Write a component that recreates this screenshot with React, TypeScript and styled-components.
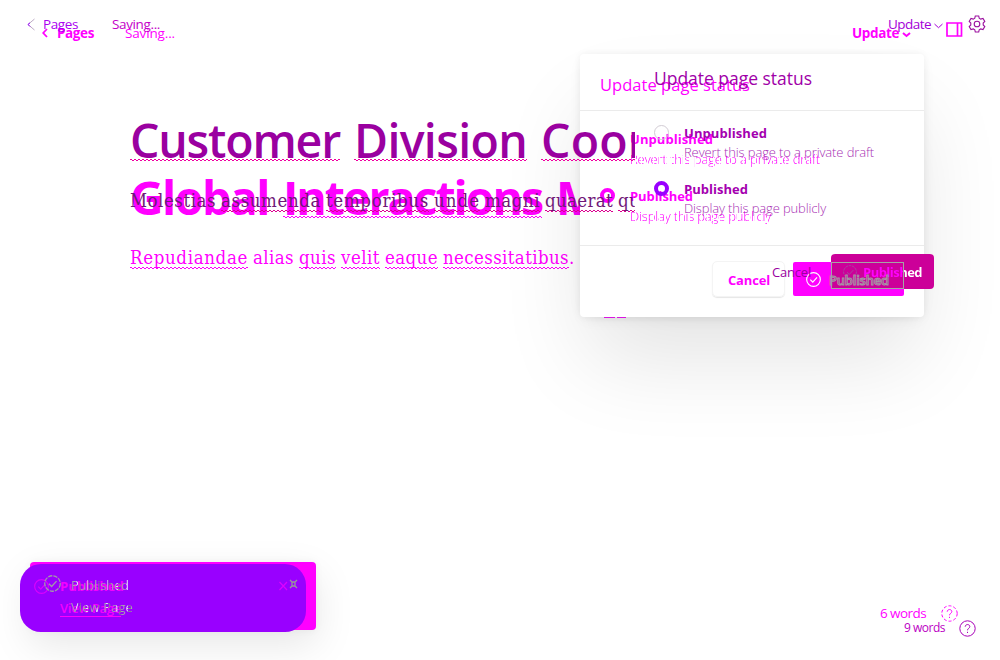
import React, { useLayoutEffect, useRef, useState } from "react";
import styled, { createGlobalStyle, css } from "styled-components";

const GlobalStyle = createGlobalStyle`
  * { box-sizing: border-box; }
  body { margin: 0; background: #fff; overflow: hidden; }
`;

const magenta = "#ff00ff";
const violet = "#9900ff";
const plum = "#9a00a0";

const Canvas = styled.div`
  display: grid;
  width: 1000px;
  height: 660px;
  overflow: hidden;
  background: #fff;
  font-family: "Open Sans", "Noto Sans", sans-serif;
`;

const Layer = styled.main<{ $front?: boolean }>`
  grid-area: 1 / 1;
  display: flex;
  flex-direction: column;
  width: 1000px;
  height: 660px;
  min-width: 0;
  position: relative;
  z-index: ${(p) => (p.$front ? 3 : 1)};
`;

const FitSpan = styled.span`
  display: inline-block;
  white-space: pre;
  flex: none;
`;

/* Tracks a label so that it fills exactly the given width. */
function Fit({ width, children }: { width: number; children: string }) {
  const ref = useRef<HTMLSpanElement>(null);
  const [spacing, setSpacing] = useState<number | null>(null);
  useLayoutEffect(() => {
    if (ref.current && spacing === null) {
      setSpacing((width - ref.current.getBoundingClientRect().width) / children.length);
    }
  }, [width, children, spacing]);
  return (
    <FitSpan ref={ref} style={spacing === null ? undefined : { width, letterSpacing: spacing }}>
      {children}
    </FitSpan>
  );
}

const TopBar = styled.header<{ $top: number; $left: number }>`
  display: flex;
  align-items: center;
  height: 20px;
  margin-top: ${(p) => p.$top}px;
  padding-left: ${(p) => p.$left}px;
  font-size: 14px;
  line-height: 20px;
`;

const BarItem = styled.div<{ $color: string; $bold?: boolean; $gap?: number; $size?: number }>`
  display: flex;
  align-items: center;
  margin-left: ${(p) => p.$gap ?? 0}px;
  color: ${(p) => p.$color};
  font-weight: ${(p) => (p.$bold ? 700 : 400)};
  font-size: ${(p) => p.$size ?? 13.5}px;
  height: 20px;
`;

const Glyph = styled.svg<{ $gap?: number; $drop?: number }>`
  display: block;
  flex: none;
  fill: none;
  margin-left: ${(p) => p.$gap ?? 0}px;
  margin-top: ${(p) => p.$drop ?? 0}px;
`;

const Title = styled.h1<{ $top: number; $color: string; $weight: number; $clip: number }>`
  display: flex;
  gap: 14px;
  margin: ${(p) => p.$top}px 0 0 130px;
  width: ${(p) => p.$clip}px;
  overflow: hidden;
  height: 60px;
  font-size: 46.5px;
  line-height: 56px;
  font-weight: ${(p) => p.$weight};
  color: ${(p) => p.$color};
`;

const Paragraph = styled.p<{ $top: number; $color: string; $clip: number }>`
  display: flex;
  gap: 5px;
  margin: ${(p) => p.$top}px 0 0 130px;
  width: ${(p) => p.$clip}px;
  overflow: hidden;
  height: 30px;
  font-family: "DejaVu Serif Condensed", "DejaVu Serif", serif;
  font-stretch: condensed;
  font-size: 18.5px;
  line-height: 28px;
  color: ${(p) => p.$color};
`;

const Word = styled.span<{ $mark?: string; $at?: number }>`
  display: block;
  flex: none;
  ${(p) =>
    p.$mark &&
    css`
      background-image: linear-gradient(90deg, ${p.$mark} 50%, transparent 50%),
        linear-gradient(90deg, transparent 50%, ${p.$mark} 50%);
      background-size: 4px 1px, 4px 1px;
      background-position: 0 ${p.$at}px, 0 ${(p.$at ?? 0) + 1}px;
      background-repeat: repeat-x;
    `}
`;

const Stop = styled(Word)`
  margin-left: -5px;
`;

type WordSpec = [string, number, boolean];

function Words({ list, mark, at }: { list: WordSpec[]; mark: string; at: number }) {
  return (
    <>
      {list.map(([text, width, marked], i) => (
        <Word key={i} $mark={marked ? mark : undefined} $at={at}>
          <Fit width={width}>{text}</Fit>
        </Word>
      ))}
    </>
  );
}

const Dialog = styled.section<{ $left: number; $top: number; $card?: boolean }>`
  position: absolute;
  left: ${(p) => p.$left}px;
  top: ${(p) => p.$top}px;
  width: 344px;
  height: 263px;
  display: flex;
  flex-direction: column;
  ${(p) =>
    p.$card &&
    css`
      background: #fff;
      border-radius: 4px;
      box-shadow: 0 0 7px rgba(0, 0, 0, 0.05), 0 4px 16px -6px rgba(0, 0, 0, 0.12),
        0 50px 90px -8px rgba(0, 0, 0, 0.11);
    `}
`;

const DialogHead = styled.div<{ $pad: string; $line?: boolean; $size: number; $color: string }>`
  height: 57px;
  flex: none;
  padding: ${(p) => p.$pad};
  border-bottom: 1px solid ${(p) => (p.$line ? "#ebebeb" : "transparent")};
  font-size: ${(p) => p.$size}px;
  line-height: 24px;
  color: ${(p) => p.$color};
`;

const DialogBody = styled.div<{ $pad: string }>`
  height: 134px;
  flex: none;
  padding: ${(p) => p.$pad};
`;

const Option = styled.div<{ $tall?: number }>`
  display: flex;
  gap: 15px;
  height: ${(p) => p.$tall ?? 57}px;
`;

const Radio = styled.span<{ $ring: string; $on?: boolean; $drop?: number }>`
  width: 15px;
  height: 15px;
  flex: none;
  margin-top: ${(p) => p.$drop ?? 2}px;
  border-radius: 50%;
  border: ${(p) => (p.$on ? 4.5 : 1)}px solid ${(p) => p.$ring};
`;

const OptionText = styled.div<{ $color: string; $soft: string; $faint?: boolean }>`
  display: flex;
  flex-direction: column;
  strong { font-size: 13px; line-height: 20px; height: 20px; font-weight: 700; color: ${(p) => p.$color}; }
  small {
    margin-top: ${(p) => (p.$faint ? 0 : -1)}px;
    font-size: 13px; line-height: 20px; height: 20px; font-weight: 300; color: ${(p) => p.$soft};
    ${(p) =>
      p.$faint &&
      css`
        -webkit-mask-image: repeating-linear-gradient(90deg, #000 0 5px, transparent 5px 6px);
        mask-image: repeating-linear-gradient(90deg, #000 0 5px, transparent 5px 6px);
      `}
  }
`;

const DialogFoot = styled.div<{ $line?: boolean; $pad: string }>`
  display: flex;
  flex: 1;
  border-top: 1px solid ${(p) => (p.$line ? "#ebebeb" : "transparent")};
  padding: ${(p) => p.$pad};
`;

const CancelButton = styled.button<{ $plain?: boolean }>`
  height: 36px;
  width: ${(p) => (p.$plain ? 59 : 73)}px;
  margin-right: ${(p) => (p.$plain ? 0 : 8)}px;
  padding: ${(p) => (p.$plain ? 0 : "2px 0 0 15px")};
  text-align: left;
  font: ${(p) => (p.$plain ? 400 : 700)} 13px "Open Sans", sans-serif;
  color: ${(p) => (p.$plain ? plum : magenta)};
  background: transparent;
  border: 1px solid ${(p) => (p.$plain ? "transparent" : "#f4f4f4")};
  border-width: ${(p) => (p.$plain ? 0 : 1)}px;
  border-radius: 5px;
  box-shadow: ${(p) => (p.$plain ? "none" : "0 1px 1px rgba(0,0,0,.1)")};
`;

const PublishButton = styled.button<{ $fill: string; $w: number; $h: number; $r: number; $pad: string; $drop?: number }>`
  display: flex;
  align-items: center;
  gap: 6px;
  width: ${(p) => p.$w}px;
  height: ${(p) => p.$h}px;
  margin-top: ${(p) => p.$drop ?? 0}px;
  padding: ${(p) => p.$pad};
  border: 0;
  border-radius: ${(p) => p.$r}px;
  background: ${(p) => p.$fill};
  color: #fff;
  font: 700 13px "Open Sans", sans-serif;
`;

const TwoTone = styled.span`
  background: linear-gradient(90deg, ${magenta} 40px, #fff 40px);
  -webkit-background-clip: text;
  background-clip: text;
  color: transparent;
`;

const Overlap = styled.div`
  position: absolute;
  z-index: 4;
  left: 831px;
  top: 262px;
  width: 73px;
  height: 27px;
  border: 1px solid #a5a5a5;
`;

const OverlapLabel = styled.div`
  position: absolute;
  z-index: 5;
  left: 829px;
  top: 270px;
  font-size: 13px;
  line-height: 20px;
  font-weight: 600;
  color: transparent;
  -webkit-text-stroke: 1px #a596a5;
`;

const Sliver = styled.div`
  position: absolute;
  left: 604px;
  top: 317px;
  display: flex;
  gap: 2px;
  span { height: 1px; background: #d816e0; }
  span:first-child { width: 11px; }
  span:last-child { width: 9px; }
`;

const Toast = styled.aside<{ $left: number; $top: number; $fill: string; $r: number; $ink: string; $pad: string; $gap: number }>`
  position: absolute;
  left: ${(p) => p.$left}px;
  top: ${(p) => p.$top}px;
  width: 286px;
  height: 68px;
  display: flex;
  align-items: flex-start;
  gap: ${(p) => p.$gap}px;
  padding: ${(p) => p.$pad};
  color: ${(p) => p.$ink};
  background: ${(p) => p.$fill};
  border-radius: ${(p) => p.$r}px;
`;

const BackToast = styled(Toast)`
  box-shadow: 0 0 8px rgba(0, 0, 0, 0.05), 0 14px 40px rgba(0, 0, 0, 0.1);
`;

const ToastText = styled.div<{ $bold?: boolean; $w: number }>`
  display: flex;
  flex-direction: column;
  width: ${(p) => p.$w}px;
  font-size: 13px;
  line-height: 22px;
  font-weight: ${(p) => (p.$bold ? 700 : 400)};
`;

const ToastLink = styled.a<{ $line?: boolean }>`
  width: 61px;
  height: 20px;
  font-weight: ${(p) => (p.$line ? 600 : 400)};
  border-bottom: ${(p) => (p.$line ? `1px solid ${magenta}` : "0")};
`;

const Speckle = styled(ToastText)`
  background: repeating-linear-gradient(90deg, #a8a0b0 0 5px, #e8dcf8 5px 7px, #8a7f90 7px 10px);
  -webkit-background-clip: text;
  background-clip: text;
  color: transparent;
`;

const WordCount = styled.footer<{ $left: number; $top: number; $size: number; $gap: number; $color: string }>`
  position: absolute;
  left: ${(p) => p.$left}px;
  top: ${(p) => p.$top}px;
  display: flex;
  align-items: center;
  gap: ${(p) => p.$gap}px;
  font-size: ${(p) => p.$size}px;
  line-height: 20px;
  color: ${(p) => p.$color};
`;

function CheckCircle({ size, color, dash, width = 1, drop }: { size: number; color: string; dash?: string; width?: number; drop?: number }) {
  return (
    <Glyph $drop={drop} width={size} height={size} viewBox="0 0 16 16" stroke={color} strokeWidth={width}>
      <circle cx="8" cy="8" r="7.3" strokeDasharray={dash} />
      <path d="M4.6 8.2 7.2 10.8 11.8 5.8" />
    </Glyph>
  );
}

function Help({ color, dash }: { color: string; dash?: string }) {
  return (
    <Glyph width="17" height="17" viewBox="0 0 17 17" stroke={color}>
      <circle cx="8.5" cy="8.5" r="7.7" strokeDasharray={dash} />
      <path d="M6.2 6.7C6.3 3.8 10.8 3.9 10.8 6.6 10.8 8.3 8.5 8.3 8.5 10.3M8.5 11.8v1.2" />
    </Glyph>
  );
}

export default function App() {
  return (
    <Canvas>
      <GlobalStyle />
      <Layer>
        <TopBar $top={23} $left={42}>
          <Glyph width="6" height="10" stroke={magenta} strokeWidth="1.8"><path d="M5 1 1.2 5 5 9" /></Glyph>
          <BarItem $color={magenta} $bold $gap={9}><Fit width={37}>Pages</Fit></BarItem>
          <BarItem $color={magenta} $gap={31}><Fit width={50}>Saving...</Fit></BarItem>
          <BarItem $color={magenta} $bold $gap={677}>
            <Fit width={47}>Update</Fit>
            <Glyph $gap={3} $drop={3} width="9" height="6" stroke={magenta} strokeWidth="2"><path d="M1 1 4.5 4 8 1" /></Glyph>
          </BarItem>
        </TopBar>
        <Title $top={126} $color={magenta} $weight={700} $clip={450}>
          <Words list={[["Global", 139, false], ["Interactions", 259, true], ["M", 45, false]]} mark={magenta} at={47} />
        </Title>
        <Paragraph $top={15} $color={magenta} $clip={450}>
          <Words
            list={[["Repudiandae", 118, true], ["alias", 41, false], ["quis", 37, true], ["velit", 39, true], ["eaque", 53, true], ["necessitatibus", 126, true]]}
            mark={magenta}
            at={23}
          />
          <Stop>.</Stop>
        </Paragraph>
        <Dialog $left={580} $top={54} $card>
          <DialogHead $pad="19px 0 0 20px" $line $size={16.5} $color={magenta}><Fit width={150}>Update page status</Fit></DialogHead>
          <DialogBody $pad="18px 0 0 20px">
            <Option>
              <Radio $ring="transparent" />
              <OptionText $color={magenta} $soft={magenta} $faint>
                <strong><Fit width={83}>Unpublished</Fit></strong>
                <small><Fit width={190}>Revert this page to a private draft</Fit></small>
              </OptionText>
            </Option>
            <Option>
              <Radio $ring={magenta} $on />
              <OptionText $color={magenta} $soft={magenta} $faint>
                <strong><Fit width={63}>Published</Fit></strong>
                <small><Fit width={141}>Display this page publicly</Fit></small>
              </OptionText>
            </Option>
          </DialogBody>
          <DialogFoot $line $pad="15px 0 0 132px">
            <CancelButton><Fit width={42}>Cancel</Fit></CancelButton>
            <PublishButton $fill={magenta} $w={111} $h={34} $r={2} $pad="0 0 0 13px" $drop={1}>
              <CheckCircle size={15} color="#fff" width={1.2} />
            </PublishButton>
          </DialogFoot>
        </Dialog>
        <Sliver><span /><span /></Sliver>
        <BackToast $left={30} $top={562} $fill={magenta} $r={4} $ink={magenta} $pad="0" $gap={0} />
        <WordCount $left={880} $top={603} $size={13.5} $gap={15} $color={magenta}>
          <Fit width={46}>6 words</Fit>
          <Help color={magenta} dash="3 2" />
        </WordCount>
      </Layer>

      <Layer $front>
        <TopBar $top={14} $left={27}>
          <Glyph width="8" height="13" stroke="#bcaac4"><path d="M7.5 1 1 6.5 7.5 12" /><path d="M3 4.8 1 6.5 3 8.5" stroke={violet} /></Glyph>
          <BarItem $color="#aa00f0" $gap={8}><Fit width={35}>Pages</Fit></BarItem>
          <BarItem $color="#c400c8" $gap={34}><Fit width={48}>Saving...</Fit></BarItem>
          <BarItem $color="#a400d8" $gap={728}>
            <Fit width={43}>Update</Fit>
            <Glyph $gap={3} $drop={4} width="9" height="6" stroke="#a400d8"><path d="M.5 1 4.5 4.7 8.5 1" /></Glyph>
          </BarItem>
          <Glyph $gap={3} $drop={10} width="17" height="15" stroke={magenta} strokeWidth="1.7"><path d="M1 1H15.5V14H1ZM11.5 1V14" /></Glyph>
          <Glyph $gap={5} width="18" height="18" viewBox="0 0 18 18" stroke="#9b109f" strokeWidth="1.1">
            <path d="M7.3 1H10.7L11.2 3.2 12.7 4.1 15 3.4 16.8 6.4 15.2 8V10L16.8 11.6 15 14.6 12.7 13.9 11.2 14.8 10.7 17H7.3L6.8 14.8 5.3 13.9 3 14.6 1.2 11.6 2.8 10V8L1.2 6.4 3 3.4 5.3 4.1 6.8 3.2Z" />
            <circle cx="9" cy="9" r="2.8" />
          </Glyph>
        </TopBar>
        <Title $top={78} $color={plum} $weight={600} $clip={505}>
          <Words list={[["Customer", 210, true], ["Division", 173, true], ["Coor", 107, true]]} mark="#f000a0" at={47} />
        </Title>
        <Paragraph $top={15} $color="#701878" $clip={505}>
          <Words
            list={[["Molestias", 86, false], ["assumenda", 100, true], ["temporibus", 103, true], ["unde", 46, true], ["magni", 55, true], ["quaerat", 68, true], ["qui", 28, true]]}
            mark="#dc0090"
            at={23}
          />
        </Paragraph>
        <Dialog $left={634} $top={46}>
          <DialogHead $pad="20px 0 0 20px" $size={17.5} $color="#a000a8"><Fit width={158}>Update page status</Fit></DialogHead>
          <DialogBody $pad="20px 0 0 20px">
            <Option $tall={56}>
              <Radio $ring="#d2ccd4" />
              <OptionText $color="#a400b0" $soft="#a830b4">
                <strong><Fit width={83}>Unpublished</Fit></strong>
                <small><Fit width={190}>Revert this page to a private draft</Fit></small>
              </OptionText>
            </Option>
            <Option>
              <Radio $ring={violet} $on />
              <OptionText $color="#a400b0" $soft="#a830b4">
                <strong><Fit width={64}>Published</Fit></strong>
                <small><Fit width={142}>Display this page publicly</Fit></small>
              </OptionText>
            </Option>
          </DialogBody>
          <DialogFoot $pad="16px 0 0 138px">
            <CancelButton $plain><Fit width={39}>Cancel</Fit></CancelButton>
            <PublishButton $fill="#cc0099" $w={103} $h={35} $r={4} $pad="0 0 0 12px">
              <CheckCircle size={14} color="#a050a0" dash="3 1" />
              <TwoTone><Fit width={59}>Published</Fit></TwoTone>
            </PublishButton>
          </DialogFoot>
        </Dialog>
        <Overlap />
        <OverlapLabel><Fit width={60}>Published</Fit></OverlapLabel>
        <Toast $left={20} $top={564} $fill={violet} $r={21} $ink={violet} $pad="0" $gap={0} />
        <Toast $left={30} $top={562} $fill="transparent" $r={0} $ink="#f400ff" $pad="13px 0 0 4px" $gap={11}>
          <CheckCircle size={15} color="#dd00ff" width={1.2} drop={4} />
          <ToastText $bold $w={64}><Fit width={64}>Published</Fit><ToastLink $line><Fit width={61}>View Page</Fit></ToastLink></ToastText>
          <Glyph $gap={144} width="9" height="22" stroke="#dd00ff" strokeWidth="1.2"><path d="M.5 7 8 15M8 7 .5 15" /></Glyph>
        </Toast>
        <Toast $left={20} $top={564} $fill="transparent" $r={0} $ink="#aaa" $pad="10px 0 0 24px" $gap={10}>
          <CheckCircle size={17} color="#a29aa8" width={1.2} dash="4 1" drop={1} />
          <Speckle $w={62}><Fit width={60}>Published</Fit><ToastLink><Fit width={62}>View Page</Fit></ToastLink></Speckle>
          <Glyph $gap={146} width="9" height="20" stroke="#999" strokeWidth="1.3"><path d="M1 6 3 8H6L8 6M1 14 3 12H6L8 14M3 8V12M6 8V12" /></Glyph>
        </Toast>
        <WordCount $left={904} $top={618} $size={12} $gap={14} $color="#bb00c4">
          <Fit width={41}>9 words</Fit>
          <Help color="#a800b8" />
        </WordCount>
      </Layer>
    </Canvas>
  );
}
